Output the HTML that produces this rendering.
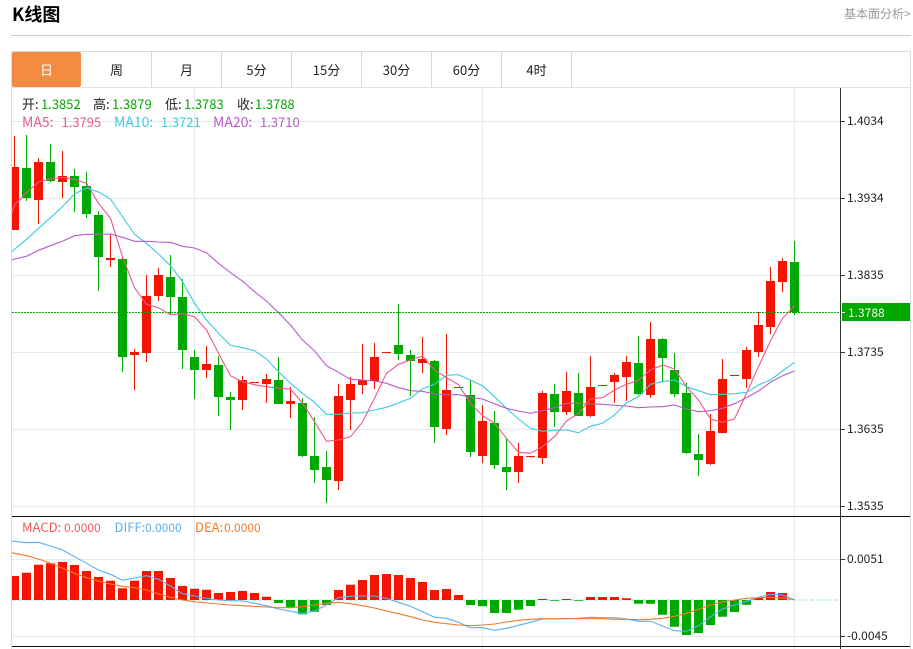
<!DOCTYPE html>
<html>
<head>
<meta charset="utf-8">
<title>K线图</title>
<style>
html,body{margin:0;padding:0;background:#fff;width:913px;height:649px;overflow:hidden}
svg{display:block;position:absolute;left:0;top:0}
text{font-family:"Noto Sans CJK SC","Liberation Sans",sans-serif}
</style>
</head>
<body>
<svg width="913" height="649" viewBox="0 0 913 649" xmlns="http://www.w3.org/2000/svg">
<rect width="913" height="649" fill="#fff"/>
<text x="12" y="21" font-size="18" font-weight="700" fill="#000">K线图</text>
<text x="844" y="18" font-size="12" fill="#999">基本面分析&gt;</text>
<path d="M11 35.5H911" stroke="#ccc" fill="none"/>

<!-- frame and tabs -->
<path d="M11.5 51.5H910.5V649M11.5 51.5V649" stroke="#d8dcdf" fill="none"/>
<path d="M12 87.5H910" stroke="#dde2e5" fill="none"/>
<path d="M151.5 52V87M221.5 52V87M291.5 52V87M361.5 52V87M431.5 52V87M501.5 52V87M571.5 52V87" stroke="#d8d8d8" fill="none"/>
<rect x="12" y="52" width="69" height="35" rx="2" fill="#f48b40"/>
<g font-size="13" fill="#222" text-anchor="middle">
<text x="46.5" y="75" fill="#fff">日</text>
<text x="116.5" y="75">周</text>
<text x="186.5" y="75">月</text>
<text x="256.5" y="75">5分</text>
<text x="326.5" y="75">15分</text>
<text x="396.5" y="75">30分</text>
<text x="466.5" y="75">60分</text>
<text x="536.5" y="75">4时</text>
</g>

<!-- grid -->
<path d="M12 121.5H840M12 198.5H840M12 275.5H840M12 352.5H840M12 429.5H840M12 506.5H840M12 559.5H840M12 636.5H840" stroke="#e3ebf1" fill="none"/>
<path d="M194.5 88V649M482.5 88V649M794.5 88V649" stroke="#e3ebf1" fill="none"/>

<!-- separators and axis -->
<path d="M12 516.5H910M12 646.5H910" stroke="#111" fill="none"/>
<path d="M840.5 88V649" stroke="#333" fill="none"/>
<path d="M840 121.5h5M840 198.5h5M840 275.5h5M840 352.5h5M840 429.5h5M840 506.5h5M840 559.5h5M840 636.5h5" stroke="#333" fill="none"/>

<!-- candles -->
<path fill="none" stroke="#f41500" d="M14.5 136V230M38.5 158V224M62.5 151V198M110.5 234V267M134.5 349V390M146.5 275V362M158.5 268V301M206.5 346V378M242.5 376V410M266.5 374V403M290.5 387V418M338.5 384V490M350.5 377V430M362.5 344V394M374.5 343V389M422.5 337V373M446.5 334V435M482.5 405V463M518.5 443V483M542.5 391V464M566.5 372V415M590.5 356V417M614.5 373V403M626.5 356V401M650.5 322V398M710.5 414V465M722.5 359V433M746.5 347V388M758.5 312V357M770.5 267V334M782.5 258V292"/>
<path fill="#f41500" d="M12 167h7v63h-7zM34 162h9v38h-9zM58 176h9v6h-9zM106 258h9v2h-9zM130 352h9v3h-9zM142 296h9v57h-9zM154 275h9v21h-9zM202 364h9v6h-9zM238 380h9v20h-9zM250 382h9v1h-9zM262 379h9v5h-9zM286 401h9v3h-9zM334 396h9v85h-9zM346 384h9v16h-9zM358 380h9v5h-9zM370 357h9v24h-9zM382 352h9v1h-9zM418 359h9v4h-9zM442 390h9v39h-9zM454 387h9v1h-9zM478 421h9v35h-9zM514 456h9v16h-9zM526 456h9v1h-9zM538 393h9v65h-9zM562 391h9v21h-9zM586 387h9v29h-9zM598 385h9v1h-9zM610 375h9v7h-9zM622 362h9v15h-9zM646 339h9v56h-9zM706 431h9v33h-9zM718 379h9v54h-9zM730 375h9v1h-9zM742 350h9v29h-9zM754 325h9v27h-9zM766 281h9v46h-9zM778 261h9v21h-9z"/>
<path fill="none" stroke="#00a800" d="M26.5 135V201M50.5 144V182M74.5 169V212M86.5 172V218M98.5 211V291M122.5 258V372M170.5 255V314M182.5 279V369M194.5 350V399M218.5 356V416M230.5 392V430M278.5 357V404M302.5 398V457M314.5 417V483M326.5 451V503M398.5 304V360M410.5 350V396M434.5 360V443M470.5 380V457M494.5 411V469M506.5 438V490M554.5 384V427M578.5 373V416M638.5 336V395M662.5 338V382M674.5 353V397M686.5 383V454M698.5 434V476M794.5 241V315"/>
<path fill="#00a800" d="M22 168h9v30h-9zM46 162h9v19h-9zM70 176h9v11h-9zM82 186h9v28h-9zM94 215h9v42h-9zM118 259h9v98h-9zM166 277h9v20h-9zM178 297h9v53h-9zM190 357h9v13h-9zM214 365h9v32h-9zM226 397h9v3h-9zM274 380h9v24h-9zM298 403h9v53h-9zM310 456h9v14h-9zM322 467h9v13h-9zM394 345h9v9h-9zM406 355h9v6h-9zM430 361h9v66h-9zM466 395h9v57h-9zM490 423h9v42h-9zM502 467h9v5h-9zM550 394h9v18h-9zM574 393h9v23h-9zM634 363h9v31h-9zM658 339h9v19h-9zM670 370h9v24h-9zM682 393h9v60h-9zM694 454h9v6h-9zM790 262h9v50h-9z"/>

<!-- current price dotted line -->
<path d="M12 312.5H840" stroke="#00a800" stroke-dasharray="2 1" fill="none"/>

<!-- MA lines -->
<polyline fill="none" stroke="#f0568f" stroke-width="1.1" points="12,213 14.5,205 26.5,192.7 38.5,182 50.5,179 62.5,177.3 74.5,179.3 86.5,183.3 98.5,203.3 110.5,218.3 122.5,256.7 134.5,287.7 146.5,304.3 158.5,307.7 170.5,314.7 182.5,313.7 194.5,316.7 206.5,330 218.5,353.3 230.5,375.7 242.5,381.7 254.5,384.7 266.5,386.7 278.5,388.3 290.5,389 302.5,403 314.5,421.7 326.5,441.3 338.5,440 350.5,436.7 362.5,422 374.5,398.3 386.5,373.3 398.5,364.3 410.5,360 422.5,356 434.5,370 446.5,377.7 458.5,384.7 470.5,403.3 482.5,415.7 494.5,423.3 506.5,438.3 518.5,452.3 530.5,453.3 542.5,446.7 554.5,436.7 566.5,421 578.5,413.3 590.5,399 602.5,397.7 614.5,390 626.5,384.3 638.5,380.3 650.5,370 662.5,365 674.5,369 686.5,386.7 698.5,400 710.5,419 722.5,422.3 734.5,419 746.5,393.3 758.5,366.7 770.5,340.7 782.5,318.3 794.5,305.7"/>
<polyline fill="none" stroke="#3ccbe0" stroke-width="1.1" points="12,251.7 14.5,249.3 26.5,239.3 38.5,228.3 50.5,217.7 62.5,206.7 74.5,194 86.5,188 98.5,192 110.5,199 122.5,216.7 134.5,234.3 146.5,243.3 158.5,254 170.5,265.7 182.5,281.7 194.5,303.3 206.5,320 218.5,333.3 230.5,345.3 242.5,347.7 254.5,350.7 266.5,359 278.5,371.7 290.5,383.3 302.5,393.3 314.5,402.3 326.5,414.3 338.5,414.3 350.5,413 362.5,412.7 374.5,410 386.5,407.3 398.5,403 410.5,398.3 422.5,389 434.5,384.3 446.5,375.3 458.5,374.7 470.5,380.3 482.5,385.7 494.5,396.7 506.5,408.3 518.5,419 530.5,428.3 542.5,431.3 554.5,430.3 566.5,430 578.5,432.7 590.5,426.3 602.5,423.3 614.5,415 626.5,402.7 638.5,396.7 650.5,384.3 662.5,381.7 674.5,380 686.5,386.7 698.5,390.7 710.5,394.7 722.5,394.3 734.5,393.7 746.5,392.3 758.5,385 770.5,380 782.5,371 794.5,362.3"/>
<polyline fill="none" stroke="#b65cc8" stroke-width="1.1" points="12,260 14.5,259 26.5,256.3 38.5,250.3 50.5,245.7 62.5,241.3 74.5,235.7 86.5,234.3 98.5,234.3 110.5,234 122.5,237.3 134.5,241.3 146.5,241.3 158.5,242 170.5,242.3 182.5,246.3 194.5,248 206.5,252.7 218.5,263.3 230.5,272.7 242.5,281 254.5,291.7 266.5,301 278.5,312.7 290.5,325 302.5,340 314.5,350.7 326.5,365.7 338.5,372.3 350.5,379.3 362.5,380 374.5,381 386.5,383.3 398.5,387.7 410.5,390.7 422.5,391.3 434.5,394 446.5,394.7 458.5,394.7 470.5,397.3 482.5,399 494.5,403.7 506.5,408.3 518.5,411 530.5,413.3 542.5,410.7 554.5,407.7 566.5,403.3 578.5,403.3 590.5,404 602.5,404.3 614.5,405.3 626.5,406 638.5,407.7 650.5,407 662.5,406.7 674.5,405 686.5,409 698.5,411.7 710.5,410.7 722.5,408.3 734.5,403.7 746.5,397.7 758.5,391 770.5,382.3 782.5,375.7 794.5,371"/>

<!-- MACD -->
<path d="M12 600H838" stroke="#a8dcef" stroke-dasharray="4 2" fill="none"/>
<path fill="#f41500" d="M12 576h7V600h-7zM22 572.7h9V600h-9zM34 564.7h9V600h-9zM46 563.3h9V600h-9zM58 562h9V600h-9zM70 565h9V600h-9zM82 571h9V600h-9zM94 577h9V600h-9zM106 580.7h9V600h-9zM118 588.3h9V600h-9zM130 580.7h9V600h-9zM142 571h9V600h-9zM154 571h9V600h-9zM166 578h9V600h-9zM178 586h9V600h-9zM190 588.7h9V600h-9zM202 589.7h9V600h-9zM214 593h9V600h-9zM226 592h9V600h-9zM238 591h9V600h-9zM250 593h9V600h-9zM262 596.7h9V600h-9zM334 590h9V600h-9zM346 584.7h9V600h-9zM358 580h9V600h-9zM370 575h9V600h-9zM382 574h9V600h-9zM394 575h9V600h-9zM406 578h9V600h-9zM418 582h9V600h-9zM430 590h9V600h-9zM442 589h9V600h-9zM454 595h9V600h-9zM538 599h9V600h-9zM562 599h9V600h-9zM586 597h9V600h-9zM598 597h9V600h-9zM610 597h9V600h-9zM622 598.3h9V600h-9zM754 597.7h9V600h-9zM766 592h9V600h-9zM778 593h9V600h-9z"/>
<path fill="#00a800" d="M274 600h9V603h-9zM286 600h9V607.3h-9zM298 600h9V614.3h-9zM310 600h9V611.7h-9zM322 600h9V605h-9zM466 600h9V605h-9zM478 600h9V606.3h-9zM490 600h9V613h-9zM502 600h9V613h-9zM514 600h9V609.7h-9zM526 600h9V606h-9zM550 600h9V600.7h-9zM574 600h9V600.7h-9zM634 600h9V603.7h-9zM646 600h9V603.7h-9zM658 600h9V614.7h-9zM670 600h9V626.7h-9zM682 600h9V635h-9zM694 600h9V633h-9zM706 600h9V625h-9zM718 600h9V616.7h-9zM730 600h9V612h-9zM742 600h9V604.7h-9z"/>
<polyline fill="none" stroke="#5cb0f2" stroke-width="1.1" points="12,541.3 14.5,541.3 26.5,542.7 38.5,542.3 50.5,546 62.5,550 74.5,556.7 86.5,563.3 98.5,570 110.5,574.3 122.5,580.3 134.5,578 146.5,575.7 158.5,579.3 170.5,586 182.5,593.7 194.5,596 206.5,598.3 218.5,600 230.5,600.7 242.5,601 254.5,603.3 266.5,605.7 278.5,609 290.5,611.3 302.5,613.3 314.5,611 326.5,605 338.5,597.7 350.5,596.3 362.5,596 374.5,596 386.5,598.3 398.5,602.3 410.5,606.3 422.5,611.7 434.5,617.3 446.5,618.3 458.5,622.3 470.5,627.7 482.5,627.7 494.5,630.3 506.5,628.3 518.5,625.3 530.5,622.3 542.5,619 554.5,619 566.5,618.7 578.5,618.3 590.5,617.3 602.5,617.7 614.5,617.7 626.5,619 638.5,621.3 650.5,621.3 662.5,626 674.5,630.7 686.5,631.3 698.5,625.7 710.5,616.7 722.5,609 734.5,605 746.5,601.3 758.5,597.3 770.5,594.3 782.5,595 794.5,599.7"/>
<polyline fill="none" stroke="#f47a2a" stroke-width="1.1" points="12,552.7 14.5,553.3 26.5,555.7 38.5,559 50.5,563.3 62.5,568.3 74.5,573.3 86.5,577.7 98.5,581 110.5,584 122.5,586.3 134.5,587.7 146.5,590 158.5,594 170.5,597.3 182.5,600 194.5,601.7 206.5,603 218.5,604 230.5,605 242.5,605.7 254.5,606.3 266.5,607 278.5,607.7 290.5,607.7 302.5,606.7 314.5,605 326.5,603.3 338.5,602.3 350.5,603.7 362.5,605.7 374.5,608 386.5,611 398.5,613.7 410.5,616.7 422.5,620 434.5,622.3 446.5,623.7 458.5,625 470.5,625.7 482.5,625 494.5,624 506.5,622 518.5,620.3 530.5,619.3 542.5,618.7 554.5,618.7 566.5,618.7 578.5,618.7 590.5,618.7 602.5,618.7 614.5,619.3 626.5,619.3 638.5,619.7 650.5,619.3 662.5,618.3 674.5,616.3 686.5,613.3 698.5,609.3 710.5,605 722.5,602 734.5,600 746.5,598.3 758.5,597.7 770.5,597.3 782.5,598 794.5,599.7"/>

<!-- price tag -->
<rect x="842" y="303" width="68" height="18" fill="#00a800"/>
<path d="M842 312.5h3" stroke="#fff" fill="none"/>

<!-- axis labels -->
<g font-size="12" fill="#222">
<text x="847" y="125">1.4034</text>
<text x="847" y="202">1.3934</text>
<text x="847" y="279">1.3835</text>
<text x="848" y="317" fill="#fff">1.3788</text>
<text x="847" y="356">1.3735</text>
<text x="847" y="433">1.3635</text>
<text x="847" y="510">1.3535</text>
<text x="847" y="563">0.0051</text>
<text x="847" y="640">-0.0045</text>
</g>

<!-- legends -->
<g font-size="13">
<text x="22" y="109" fill="#222">开:</text><text x="41" y="109" fill="#00a800">1.3852</text>
<text x="93" y="109" fill="#222">高:</text><text x="112" y="109" fill="#00a800">1.3879</text>
<text x="165" y="109" fill="#222">低:</text><text x="184" y="109" fill="#00a800">1.3783</text>
<text x="237" y="109" fill="#222">收:</text><text x="255" y="109" fill="#00a800">1.3788</text>
<text x="22" y="127" font-size="14" fill="#f0568f">MA5:</text><text x="61.5" y="127" fill="#f0568f">1.3795</text>
<text x="114" y="127" font-size="14" fill="#3ccbe0">MA10:</text><text x="161" y="127" fill="#3ccbe0">1.3721</text>
<text x="213" y="127" font-size="14" fill="#b65cc8">MA20:</text><text x="260" y="127" fill="#b65cc8">1.3710</text>
</g>
<g font-size="12">
<text x="22" y="532" font-size="13" fill="#f25a5a">MACD:</text><text x="64" y="532" fill="#f25a5a">0.0000</text>
<text x="114.5" y="532" font-size="13" fill="#5cb0f2">DIFF:</text><text x="145" y="532" fill="#5cb0f2">0.0000</text>
<text x="195" y="532" font-size="13" fill="#f47a2a">DEA:</text><text x="224" y="532" fill="#f47a2a">0.0000</text>
</g>
</svg>
</body>
</html>
